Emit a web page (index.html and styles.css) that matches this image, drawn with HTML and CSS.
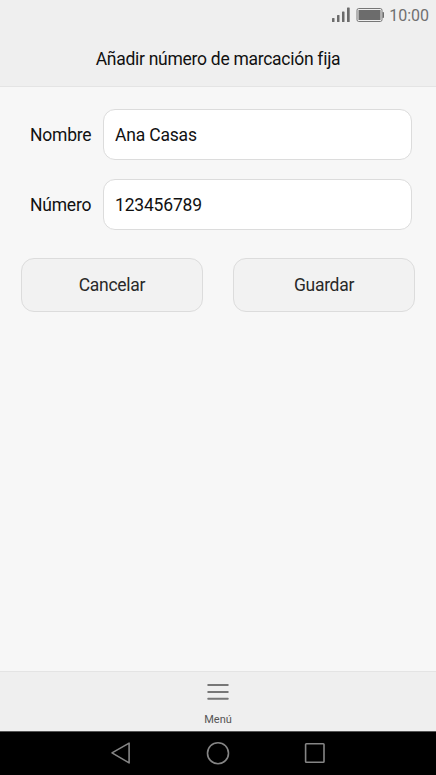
FILE: index.html
```html
<!DOCTYPE html>
<html lang="es">
<head>
<meta charset="utf-8">
<title>Añadir número de marcación fija</title>
<link rel="stylesheet" href="styles.css">
</head>
<body>
<div class="phone">
  <header class="header">
    <div class="status">
      <svg class="status-icons" width="54" height="18" viewBox="0 0 54 18">
        <g fill="#6c6c6c">
          <rect x="1" y="12" width="2.5" height="4" rx=".6"/>
          <rect x="6" y="9" width="2.5" height="7" rx=".6"/>
          <rect x="11" y="5.5" width="2.5" height="10.5" rx=".6"/>
          <rect x="16" y="1.5" width="2.7" height="14.5" rx=".6"/>
          <rect x="27.5" y="4" width="22" height="10"/>
          <path d="M51.5 6h.7q.8 0 .8 1v4q0 1-.8 1h-.7z"/>
        </g>
        <rect x="26" y="2.5" width="25" height="13" rx="1.7" fill="none" stroke="#777" stroke-width="1"/>
      </svg>
      <span class="clock">10:00</span>
    </div>
    <h1 class="title">Añadir número de marcación fija</h1>
  </header>
  <main class="content">
    <div class="row">
      <label class="label" for="name">Nombre</label>
      <input class="field" id="name" type="text" value="Ana Casas">
    </div>
    <div class="row">
      <label class="label" for="number">Número</label>
      <input class="field" id="number" type="text" value="123456789">
    </div>
    <div class="actions">
      <button class="button" type="button">Cancelar</button>
      <button class="button" type="button">Guardar</button>
    </div>
  </main>
  <div class="menu">
    <svg width="22" height="18" viewBox="0 0 22 18">
      <path d="M1.2 2h19.6M1.2 9h19.6M1.2 15.8h19.6" fill="none" stroke="#777" stroke-width="1.9" stroke-linecap="round"/>
    </svg>
    <span class="menu-label">Menú</span>
  </div>
  <nav class="navbar">
    <svg width="24" height="24" viewBox="0 0 24 24"><path d="M3 11.9L20.1 2.1V21.9Z"/></svg>
    <svg width="24" height="24" viewBox="0 0 24 24"><circle cx="12" cy="12.2" r="10.5"/></svg>
    <svg width="24" height="24" viewBox="0 0 24 24"><rect x="2.6" y="2.8" width="18.4" height="18.4" rx=".8"/></svg>
  </nav>
</div>
</body>
</html>
```
FILE: styles.css
```css
* {
  box-sizing: border-box;
}

body {
  margin: 0;
  font-family: Roboto, "Liberation Sans", sans-serif;
  font-variant-ligatures: none;
  background: #f7f7f7;
}

.phone {
  display: flex;
  flex-direction: column;
  width: 436px;
  height: 775px;
  overflow: hidden;
}

.header {
  height: 87px;
  background: #efefef;
  border-bottom: 1px solid #e4e4e4;
}

.status {
  display: flex;
  justify-content: flex-end;
  align-items: center;
  gap: 5px;
  height: 30px;
  padding-right: 7px;
}

.status-icons {
  margin-top: -1px;
  margin-right: -1px;
}

.clock {
  margin-top: 2px;
  font-size: 16px;
  line-height: 20px;
  color: #707070;
}

.title {
  margin: 18px 0 0;
  font-size: 17.5px;
  font-weight: 400;
  line-height: 22px;
  letter-spacing: -0.28px;
  text-align: center;
  color: #111;
}

.content {
  flex: 1;
  padding: 22px 24px 0 30px;
}

.row {
  display: flex;
  align-items: center;
  margin-bottom: 19px;
}

.label {
  width: 73px;
  padding-top: 1px;
  font-size: 17.5px;
  letter-spacing: -0.22px;
  color: #111;
}

.field {
  flex: 1;
  min-width: 0;
  height: 51px;
  padding: 1px 11px 0;
  border: 1px solid #dcdcdc;
  border-radius: 12px;
  background: #fff;
  font: 17.5px Roboto, "Liberation Sans", sans-serif;
  letter-spacing: -0.18px;
  color: #111;
}

.actions {
  display: flex;
  justify-content: space-between;
  margin: 28px -3px 0 -9px;
}

.button {
  width: 182px;
  height: 54px;
  padding: 0;
  border: 1px solid #dcdcdc;
  border-radius: 13px;
  background: #f2f2f2;
  font: 17.5px Roboto, "Liberation Sans", sans-serif;
  letter-spacing: -0.28px;
  color: #292929;
}

.menu {
  display: flex;
  flex-direction: column;
  align-items: center;
  height: 60px;
  padding-top: 11px;
  background: #efefef;
  border-top: 1px solid #e4e4e4;
}

.menu-label {
  margin-top: 12px;
  font-size: 11px;
  line-height: 14px;
  color: #555;
}

.navbar {
  display: flex;
  justify-content: center;
  align-items: center;
  gap: 73px;
  height: 44px;
  padding-bottom: 1px;
  border-top: 1px solid #555;
  background: #000;
}

.navbar svg {
  fill: none;
  stroke: #858585;
  stroke-width: 1.6;
  stroke-linejoin: round;
}
```
